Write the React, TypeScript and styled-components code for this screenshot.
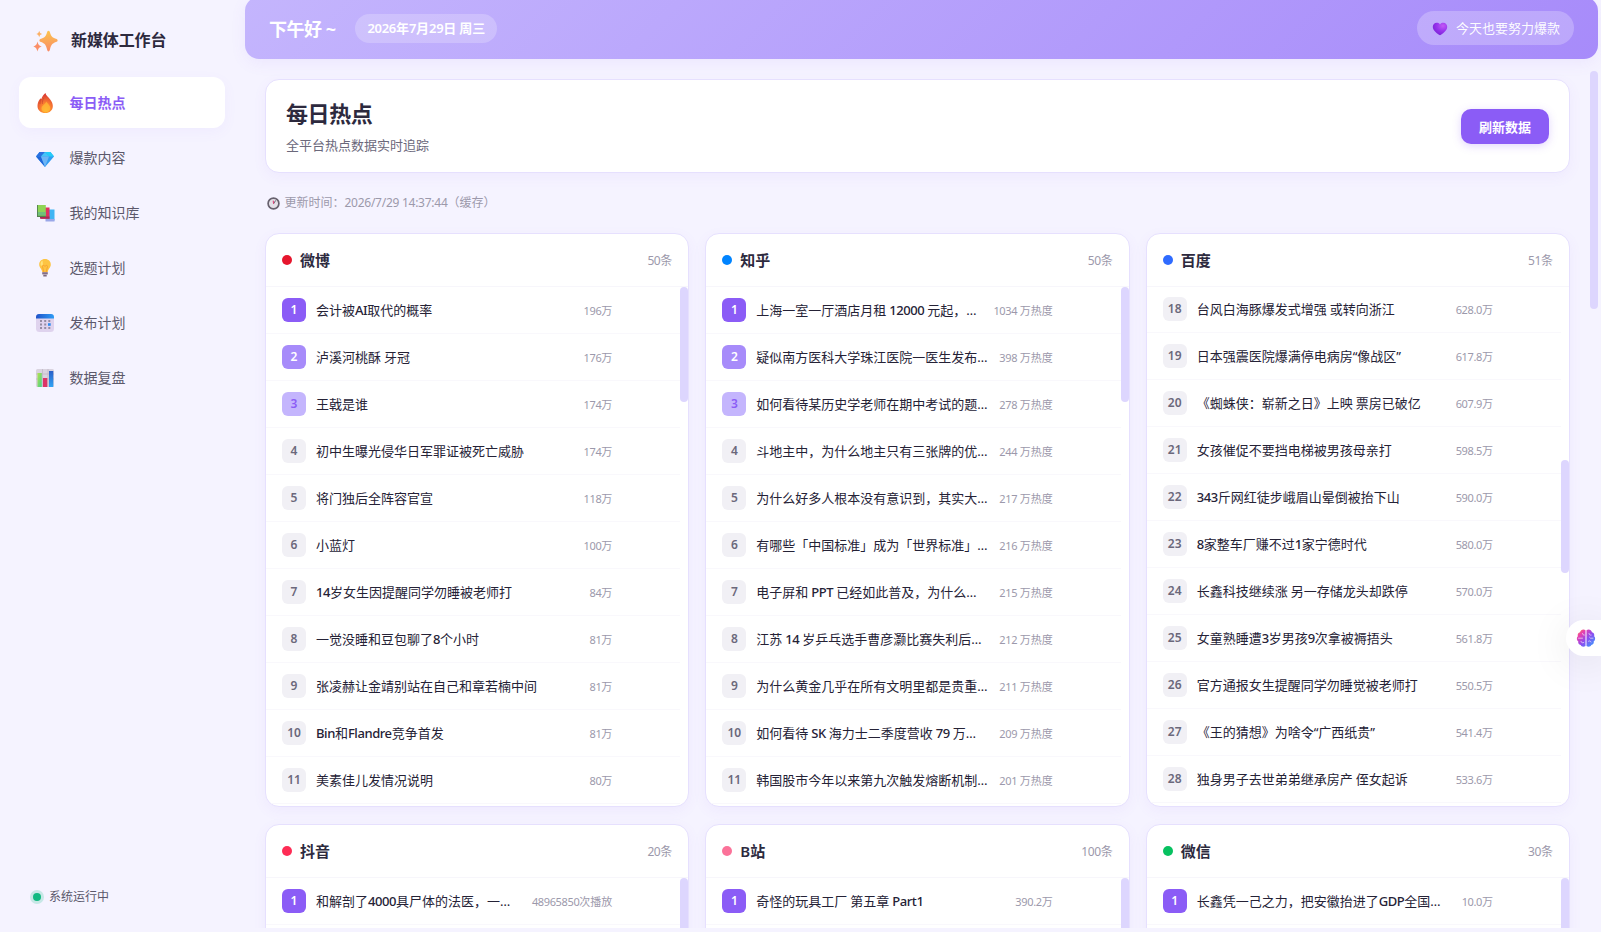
import React from 'react';
import styled, { createGlobalStyle } from 'styled-components';

const GlobalStyle = createGlobalStyle`
  * { box-sizing: border-box; }
  body {
    margin: 0;
    background: #f5f3ff;
    color: #2d2a3e;
    font-family: "Noto Sans", "Noto Sans CJK SC", sans-serif;
    overflow: hidden;
  }
  h1, h2, p { margin: 0; }
`;

/* ---------- text ---------- */

const Latin = styled.span<{ $weight?: number; $tracking?: number }>`
  letter-spacing: ${p => p.$tracking ?? -0.033}em;
  font-weight: ${p => p.$weight ?? 'inherit'};
`;

const Mixed = ({ children, weight, tracking }: { children: string; weight?: number; tracking?: number }) => (
  <>
    {children.split(/([A-Za-z0-9 ./:]+)/).map((part, i) =>
      i % 2 ? <Latin key={i} $weight={weight} $tracking={tracking}>{part}</Latin> : part
    )}
  </>
);

/* ---------- shell ---------- */

const Shell = styled.div`
  display: flex;
  width: 1601px;
  height: 928px;
  overflow: hidden;
`;

const Sidebar = styled.aside`
  width: 245px;
  flex: none;
  display: flex;
  flex-direction: column;
  padding: 21px 20px 20px 19px;
`;

const Brand = styled.div`
  display: flex;
  align-items: center;
  gap: 13px;
  height: 38px;
  margin-bottom: 18px;
  padding: 0 0 2px 14px;
  font-size: 16px;
  font-weight: 600;
  letter-spacing: -0.1px;
  color: #2d2a3e;
  svg { margin-top: 5px; }
`;

const Nav = styled.nav`
  display: flex;
  flex-direction: column;
  gap: 4px;
`;

const NavItem = styled.a<{ $active?: boolean }>`
  display: flex;
  align-items: center;
  gap: 15px;
  height: 51px;
  padding: 0 16px;
  border-radius: 12px;
  font-size: 14px;
  font-weight: ${p => (p.$active ? 600 : 400)};
  color: ${p => (p.$active ? '#8b5cf6' : '#5b586b')};
  background: ${p => (p.$active ? '#fff' : 'transparent')};
  box-shadow: ${p => (p.$active ? '0 4px 14px rgba(139, 92, 246, 0.05)' : 'none')};
`;

const NavLabel = styled.span`
  padding-bottom: 2px;
  margin-left: -0.5px;
`;

const Status = styled.div`
  display: flex;
  align-items: center;
  gap: 8px;
  margin-top: auto;
  padding: 0 14px 2px;
  font-size: 12px;
  line-height: 18px;
  color: #5b586b;
`;

const StatusDot = styled.i`
  width: 8px;
  height: 8px;
  border-radius: 50%;
  background: #10b981;
  box-shadow: 0 0 0 3px rgba(16, 185, 129, 0.2);
`;

const Main = styled.main`
  flex: 1;
  min-width: 0;
  margin-right: 3px;
  display: flex;
  flex-direction: column;
`;

const TopBar = styled.header`
  flex: none;
  display: flex;
  align-items: center;
  height: 62px;
  margin: -3px 0 12px;
  padding: 0 24px;
  border-radius: 14px;
  color: #fff;
  background: linear-gradient(135deg, #c4b5fd 0%, #a78bfa 100%);
  box-shadow: 0 4px 16px rgba(139, 92, 246, 0.08);
`;

const Greeting = styled.span`
  font-size: 18px;
  font-weight: 700;
  letter-spacing: -0.5px;
  margin-right: 20px;
`;

const DatePill = styled.span`
  height: 29px;
  padding: 0 12px;
  border-radius: 15px;
  font-size: 13px;
  font-weight: 600;
  line-height: 28px;
  background: rgba(255, 255, 255, 0.22);
`;

const MoodPill = styled.span`
  display: flex;
  align-items: center;
  gap: 8px;
  height: 34px;
  margin-left: auto;
  padding: 0 14px 0 15px;
  border-radius: 17px;
  font-size: 13px;
  background: rgba(255, 255, 255, 0.24);
  color: rgba(255, 255, 255, 0.98);
  svg { margin-top: 2px; }
`;

const MoodText = styled.span`
  padding-bottom: 2px;
`;

const Scroller = styled.div`
  flex: 1;
  min-height: 0;
  display: flex;
  overflow: hidden;
`;

const Content = styled.div`
  flex: 1;
  min-width: 0;
  padding: 8px 20px 0;
`;

const Track = styled.div`
  flex: none;
  width: 8px;
`;

const Thumb = styled.div<{ $top?: number; $size: number }>`
  width: 8px;
  height: ${p => p.$size}px;
  margin-top: ${p => p.$top ?? 0}px;
  border-radius: 4px;
  background: #ddd6fe;
`;

/* ---------- page heading ---------- */

const Panel = styled.section`
  background: #fff;
  border: 1px solid #e6e0fe;
  border-radius: 14px;
  box-shadow: 0 4px 14px rgba(139, 92, 246, 0.06);
`;

const Intro = styled(Panel)`
  display: flex;
  align-items: center;
  justify-content: space-between;
  height: 94px;
  padding: 0 20px;
`;

const Title = styled.h1`
  font-size: 22px;
  font-weight: 700;
  line-height: 34px;
  letter-spacing: -0.4px;
  margin-bottom: 4px;
`;

const Subtitle = styled.p`
  font-size: 13px;
  line-height: 22px;
  color: #6b687b;
`;

const RefreshButton = styled.button`
  width: 88px;
  height: 35px;
  padding: 0;
  border: 0;
  border-radius: 10px;
  font: 600 13px/33px "Noto Sans CJK SC", sans-serif;
  color: #fff;
  background: #8b5cf6;
  box-shadow: 0 2px 8px rgba(139, 92, 246, 0.25);
`;

const Updated = styled.div`
  display: flex;
  align-items: center;
  gap: 5px;
  height: 18px;
  margin: 21px 0;
  padding-left: 1.5px;
  font-size: 12px;
  color: #9c99ab;
`;

const UpdatedText = styled.span`
  padding-bottom: 2px;
`;

/* ---------- boards ---------- */

const Boards = styled.div`
  display: grid;
  grid-template-columns: repeat(3, 1fr);
  grid-auto-rows: 574px;
  gap: 17px 16px;
`;

const Board = styled(Panel)`
  display: flex;
  flex-direction: column;
  overflow: hidden;
`;

const BoardHead = styled.div`
  flex: none;
  display: flex;
  align-items: center;
  height: 53px;
  padding: 0 16px;
  border-bottom: 1px solid #f7f6fb;
`;

const Dot = styled.i<{ $color: string }>`
  width: 10px;
  height: 10px;
  margin-right: 8px;
  border-radius: 50%;
  background: ${p => p.$color};
`;

const BoardName = styled.h2`
  font-size: 15px;
  font-weight: 600;
  line-height: 22px;
`;

const Count = styled.span`
  margin-left: auto;
  padding-bottom: 1px;
  font-size: 12px;
  color: #9c99ab;
`;

const BoardBody = styled.div`
  flex: 1;
  min-height: 0;
  display: flex;
  overflow: hidden;
`;

const Rows = styled.div<{ $shift?: number }>`
  flex: 1;
  min-width: 0;
  margin-top: ${p => -(p.$shift ?? 0)}px;
`;

const Row = styled.div`
  display: flex;
  align-items: center;
  height: 47px;
  padding: 0 68px 0 16px;
  border-bottom: 1px solid #f9f8fc;
`;

const rankColors: Record<number, [string, string]> = {
  1: ['#8b5cf6', '#fff'],
  2: ['#a78bfa', '#fff'],
  3: ['#c4b5fd', '#8b5cf6'],
};

const Rank = styled.span<{ $rank: number }>`
  flex: none;
  width: 24px;
  height: 24px;
  margin-right: 10px;
  border-radius: 6px;
  font-size: 12px;
  font-weight: 600;
  line-height: 23px;
  text-align: center;
  background: ${p => rankColors[p.$rank]?.[0] ?? '#f1f0f5'};
  color: ${p => rankColors[p.$rank]?.[1] ?? '#6b687b'};
`;

const Topic = styled.span`
  flex: 1;
  min-width: 0;
  padding-bottom: 1px;
  font-size: 13px;
  font-weight: 400;
  white-space: nowrap;
  color: #252236;
`;

const Heat = styled.span`
  flex: none;
  padding-bottom: 1px;
  font-size: 11px;
  white-space: nowrap;
  color: #9c99ab;
`;

const Assistant = styled.div`
  position: fixed;
  top: 620px;
  right: 0;
  display: flex;
  align-items: center;
  width: 35px;
  height: 36px;
  padding-left: 10px;
  border-radius: 18px 0 0 18px;
  background: #fff;
  box-shadow: 0 6px 40px rgba(0, 0, 0, 0.1);
`;

/* ---------- icons ---------- */

const Sparkles = () => (
  <svg width="25" height="23" viewBox="0 0 25 23">
    <defs>
      <linearGradient id="spark" x1="0" y1="0" x2="0" y2="1">
        <stop offset="0" stopColor="#fcc44f" />
        <stop offset="1" stopColor="#f98a66" />
      </linearGradient>
    </defs>
    <path fill="url(#spark)" d="M15.500.800c.8 0 1.200.7 1.500 1.700 1 3.700 2.200 5 5.900 6.300 1.200.4 1.700.9 1.700 1.600s-.5 1.200-1.700 1.600c-3.700 1.400-4.900 3-5.900 7.300-.3 1.300-.7 2.100-1.500 2.100s-1.200-.8-1.500-2.100c-1-4.300-2.200-5.900-5.900-7.300-1.200-.4-1.700-.9-1.700-1.600s.5-1.200 1.700-1.600c3.700-1.300 4.900-2.600 5.900-6.300.3-1 .7-1.700 1.500-1.700z" />
    <path fill="#fbb066" d="M6.200.800c.6 2.200 1 2.600 3 3.200-2 .7-2.400 1.200-3 3.200-.6-2-1-2.500-2.900-3.200 1.900-.6 2.300-1 2.900-3.200z" />
    <path fill="#fb8f68" d="M4.500 11.500c.8 3.200 1.300 4 4.200 5-2.900 1.100-3.400 2-4.200 5.100-.8-3.100-1.400-4-4.200-5.100 2.800-1 3.400-1.800 4.200-5z" />
  </svg>
);

const Fire = () => (
  <svg width="20" height="20" viewBox="0 0 20 20">
    <defs>
      <radialGradient id="fire" cx=".55" cy=".85" r=".75">
        <stop offset="0" stopColor="#ffb02e" />
        <stop offset=".45" stopColor="#fb8230" />
        <stop offset="1" stopColor="#dc3f34" />
      </radialGradient>
    </defs>
    <path fill="url(#fire)" d="M10.500 0c.3 2.500 3 4.200 4.700 6.400 1.800 2.300 2.600 4.400 2.600 6.600 0 4.300-3 7-7.500 7S2.500 17.300 2.500 13c0-3 1-5.500 2.700-7.300.5-.5 1-.1 1 .5C7 4 8.500 1.500 10.500 0z" />
    <path fill="none" stroke="#c9482f" strokeWidth=".7" d="M6.200 6c-1 2-1.300 3.500-1.200 5M8.800 5c-1.300 2-1.500 4-1.300 5.800" />
    <path fill="#ffbf36" opacity=".7" d="M11.500 8.500c.2 1.700 3.800 3.600 3.800 6.800 0 2.400-1.900 3.900-4.500 3.900s-4.300-1.400-4.300-3.800c0-2.700 3.600-4 5-6.900z" />
  </svg>
);

const Gem = () => (
  <svg width="20" height="20" viewBox="0 0 20 20">
    <path fill="#2f9df2" d="M1 8.500 4.500 4h11L19 8.500 10 19z" />
    <path fill="#24cdf8" d="M10 4h5.500L19 8.500h-5z" />
    <path fill="#2a6fe0" d="M4.500 4H10L6 8.500H1z" />
    <path fill="#46c4f7" d="m10 4 4 4.500H6z" />
    <path fill="#2165d8" d="M1 8.500h5L10 19z" />
    <path fill="#6db4f5" d="M6 8.500h8L10 19z" />
  </svg>
);

const Books = () => (
  <svg width="20" height="20" viewBox="0 0 20 20">
    <path fill="#3fb4f3" d="M13 6.500h6.500v11H11z" />
    <path fill="#9aa7e8" d="M10.500 16h9v2.500h-9z" />
    <path fill="#e0315f" d="M9 4.500h5.500v11.200H6z" />
    <path fill="#a92a55" d="M5 13.500h9.500v2.200H5z" />
    <path fill="#8fd456" d="M2 2h8.800v11.500H2z" />
    <path fill="#6fc07c" d="M2 9h8.800v3.500H2z" />
    <path fill="#527f4f" d="M2 2h.9v12H2zM2.500 12.800h8.300v1.200H2.500z" />
  </svg>
);

const Bulb = () => (
  <svg width="20" height="20" viewBox="0 0 20 20">
    <path fill="#fdc443" d="M10 1c3.500 0 5.800 2.400 5.800 5.500 0 3.300-2.600 4.200-3 7.500H7.200c-.4-3.300-3-4.200-3-7.500C4.200 3.400 6.500 1 10 1z" />
    <path fill="#ffe27a" d="M7.500 2.500C5.500 3.500 5 6 6 8l2-1.500z" />
    <path fill="none" stroke="#f59b2d" strokeWidth=".8" d="M8.800 14 7.500 8.500c0-1.500 2-1.500 2.500 0 .5-1.500 2.500-1.500 2.500 0L11.200 14" />
    <path fill="#9b8598" d="M7.200 14h5.600v2.500H7.200z" />
    <path fill="#7c6880" d="M7.500 15h5v.7h-5zM8.300 16.800h3.400v1.800H8.300z" />
  </svg>
);

const Calendar = () => (
  <svg width="20" height="20" viewBox="0 0 20 20">
    <defs>
      <linearGradient id="calTop" x1="0" y1="0" x2="1" y2="0">
        <stop offset="0" stopColor="#1f52c9" />
        <stop offset="1" stopColor="#2e9cf5" />
      </linearGradient>
    </defs>
    <rect x="1" y="1" width="18" height="18" rx="3.500" fill="#dfd3ee" />
    <path fill="url(#calTop)" d="M4 1h12c1.800 0 3 1.200 3 3v1.500H1V4c0-1.800 1.200-3 3-3z" />
    <path fill="#968da4" d="M5 7h2v2H5zM9.200 7h2v2h-2zM13.300 7h2v2h-2zM5 10.500h2v2H5zM9.200 10.500h2v2h-2zM5 14h2v2H5zM9.200 14h2v2h-2zM13.300 14h2v2h-2z" />
    <path fill="#2c8cf0" d="M13 10.200h2.700v2.600H13z" />
  </svg>
);

const Chart = () => (
  <svg width="20" height="20" viewBox="0 0 20 20">
    <defs>
      <linearGradient id="barG" x1="0" y1="0" x2="1" y2="1">
        <stop offset="0" stopColor="#b4e24c" />
        <stop offset="1" stopColor="#45cf8e" />
      </linearGradient>
      <linearGradient id="barB" x1="0" y1="0" x2="0" y2="1">
        <stop offset="0" stopColor="#2a5fc9" />
        <stop offset="1" stopColor="#31a4f5" />
      </linearGradient>
    </defs>
    <rect x="1" y="1" width="18" height="18" rx="1.500" fill="#d9d3df" />
    <path stroke="#b8b0c0" strokeWidth=".6" d="M1 6h18M1 11h18M7.500 1v18M13 1v18" />
    <path fill="url(#barG)" d="M2.500 5h4.300v14H2.500z" />
    <path fill="#dc3468" d="M8 10h4.300v9H8z" />
    <path fill="url(#barB)" d="M14 3h4.300v16H14z" />
  </svg>
);

const Heart = () => (
  <svg width="16" height="14" viewBox="0 0 16 14">
    <defs>
      <radialGradient id="heart" cx=".7" cy=".25" r=".8">
        <stop offset="0" stopColor="#c25af5" />
        <stop offset=".5" stopColor="#9a35ee" />
        <stop offset="1" stopColor="#7a22d6" />
      </radialGradient>
    </defs>
    <path fill="url(#heart)" d="M8 2.500C9 1 10 .8 11.300.8c2.300 0 3.900 1.700 3.900 4 0 3.400-3.400 6-6.200 8-.7.5-1.300.5-2 0-2.800-2-6.200-4.600-6.200-8 0-2.300 1.600-4 3.900-4C6 .8 7 1 8 2.500z" />
  </svg>
);

const Clock = () => (
  <svg width="13" height="13" viewBox="0 0 13 13">
    <circle cx="6.500" cy="6.500" r="5.400" fill="#e4e0e8" stroke="#67616e" strokeWidth="1.700" />
    <path stroke="#55505c" strokeWidth=".9" d="M6.500 6.800 8.700 3.400" />
    <path stroke="#e0457a" strokeWidth="1.100" d="M6.600 6.800 6.200 3.600" />
  </svg>
);

const Brain = () => (
  <svg width="20" height="20" viewBox="0 0 20 20">
    <defs>
      <linearGradient id="brain" x1="0" y1="0" x2="1" y2="1">
        <stop offset="0" stopColor="#ff8a3c" />
        <stop offset=".25" stopColor="#e83fb0" />
        <stop offset=".55" stopColor="#8a4cf0" />
        <stop offset="1" stopColor="#2fa8ff" />
      </linearGradient>
    </defs>
    <path fill="url(#brain)" d="M9.500 2.200v15.800c-1.600 1.200-4.200.9-4.800-1-1.800-.3-2.900-1.900-2.400-3.500C.6 12.500.3 9.500 1.800 8.200 1.300 6.200 2.400 4.600 4 4.300 4.500 1.400 7.800.6 9.500 2.200zM10.500 2.200v15.800c1.600 1.200 4.200.9 4.800-1 1.800-.3 2.900-1.900 2.400-3.500 1.700-1 2-4 .5-5.300.5-2-.6-3.600-2.200-3.900-.5-2.900-3.800-3.700-5.500-2.100z" />
    <path fill="none" stroke="#fff" strokeWidth=".8" strokeLinecap="round" opacity=".75" d="M2.500 10.200h4M6.500 5.500c0 1 .7 1.600 1.800 1.600M5 13.500c.2 1.200 1.600 1.800 2.800 1M13 5.500c0 1.200 1 1.800 2.200 1.600M17 10.200h-2.500l-1-1M12.500 13.200c.8-.7 2-.4 2.500.8" />
  </svg>
);

/* ---------- data ---------- */

type Item = [string, string];
interface BoardData {
  name: string;
  color: string;
  count: number;
  first?: number;
  shift?: number;
  thumb: { top?: number; size: number };
  items: Item[];
}

const boards: BoardData[] = [
  {
    name: '微博', color: '#e6162d', count: 50, thumb: { size: 115 },
    items: [
      ['会计被AI取代的概率', '196万'],
      ['泸溪河桃酥 牙冠', '176万'],
      ['王戟是谁', '174万'],
      ['初中生曝光侵华日军罪证被死亡威胁', '174万'],
      ['将门独后全阵容官宣', '118万'],
      ['小蓝灯', '100万'],
      ['14岁女生因提醒同学勿睡被老师打', '84万'],
      ['一觉没睡和豆包聊了8个小时', '81万'],
      ['张凌赫让金靖别站在自己和章若楠中间', '81万'],
      ['Bin和Flandre竞争首发', '81万'],
      ['美素佳儿发情况说明', '80万'],
    ],
  },
  {
    name: '知乎', color: '#0084ff', count: 50, thumb: { size: 115 },
    items: [
      ['上海一室一厅酒店月租 12000 元起，…', '1034 万热度'],
      ['疑似南方医科大学珠江医院一医生发布…', '398 万热度'],
      ['如何看待某历史学老师在期中考试的题…', '278 万热度'],
      ['斗地主中，为什么地主只有三张牌的优…', '244 万热度'],
      ['为什么好多人根本没有意识到，其实大…', '217 万热度'],
      ['有哪些「中国标准」成为「世界标准」…', '216 万热度'],
      ['电子屏和 PPT 已经如此普及，为什么…', '215 万热度'],
      ['江苏 14 岁乒乓选手曹彦灏比赛失利后…', '212 万热度'],
      ['为什么黄金几乎在所有文明里都是贵重…', '211 万热度'],
      ['如何看待 SK 海力士二季度营收 79 万…', '209 万热度'],
      ['韩国股市今年以来第九次触发熔断机制…', '201 万热度'],
    ],
  },
  {
    name: '百度', color: '#2f6bff', count: 51, first: 18, shift: 1, thumb: { top: 173, size: 113 },
    items: [
      ['台风白海豚爆发式增强 或转向浙江', '628.0万'],
      ['日本强震医院爆满停电病房“像战区”', '617.8万'],
      ['《蜘蛛侠：崭新之日》上映 票房已破亿', '607.9万'],
      ['女孩催促不要挡电梯被男孩母亲打', '598.5万'],
      ['343斤网红徒步峨眉山晕倒被抬下山', '590.0万'],
      ['8家整车厂赚不过1家宁德时代', '580.0万'],
      ['长鑫科技继续涨 另一存储龙头却跌停', '570.0万'],
      ['女童熟睡遭3岁男孩9次拿被褥捂头', '561.8万'],
      ['官方通报女生提醒同学勿睡觉被老师打', '550.5万'],
      ['《王的猜想》为啥令“广西纸贵”', '541.4万'],
      ['独身男子去世弟弟继承房产 侄女起诉', '533.6万'],
    ],
  },
  {
    name: '抖音', color: '#fe2c55', count: 20, thumb: { size: 280 },
    items: [['和解剖了4000具尸体的法医，一…', '48965850次播放']],
  },
  {
    name: 'B站', color: '#fb7299', count: 100, thumb: { size: 80 },
    items: [['奇怪的玩具工厂 第五章 Part1', '390.2万']],
  },
  {
    name: '微信', color: '#07c160', count: 30, thumb: { size: 190 },
    items: [['长鑫凭一己之力，把安徽抬进了GDP全国…', '10.0万']],
  },
];

const navItems = [
  { label: '每日热点', Icon: Fire },
  { label: '爆款内容', Icon: Gem },
  { label: '我的知识库', Icon: Books },
  { label: '选题计划', Icon: Bulb },
  { label: '发布计划', Icon: Calendar },
  { label: '数据复盘', Icon: Chart },
];

export default function App() {
  return (
    <Shell>
      <GlobalStyle />
      <Sidebar>
        <Brand><Sparkles />新媒体工作台</Brand>
        <Nav>
          {navItems.map(({ label, Icon }, i) => (
            <NavItem key={label} $active={i === 0}><Icon /><NavLabel>{label}</NavLabel></NavItem>
          ))}
        </Nav>
        <Status><StatusDot />系统运行中</Status>
      </Sidebar>
      <Main>
        <TopBar>
          <Greeting>下午好 ~</Greeting>
          <DatePill><Mixed tracking={-0.026}>2026年7月29日 周三</Mixed></DatePill>
          <MoodPill><Heart /><MoodText>今天也要努力爆款</MoodText></MoodPill>
        </TopBar>
        <Scroller>
          <Content>
            <Intro>
              <div>
                <Title>每日热点</Title>
                <Subtitle>全平台热点数据实时追踪</Subtitle>
              </div>
              <RefreshButton>刷新数据</RefreshButton>
            </Intro>
            <Updated>
              <Clock />
              <UpdatedText><Mixed tracking={-0.022}>更新时间：2026/7/29 14:37:44（缓存）</Mixed></UpdatedText>
            </Updated>
            <Boards>
              {boards.map(b => (
                <Board key={b.name}>
                  <BoardHead>
                    <Dot $color={b.color} />
                    <BoardName>{b.name}</BoardName>
                    <Count><Mixed>{`${b.count}条`}</Mixed></Count>
                  </BoardHead>
                  <BoardBody>
                    <Rows $shift={b.shift}>
                      {b.items.map(([topic, heat], i) => {
                        const rank = (b.first ?? 1) + i;
                        return (
                          <Row key={rank}>
                            <Rank $rank={rank}>{rank}</Rank>
                            <Topic><Mixed weight={500}>{topic}</Mixed></Topic>
                            <Heat><Mixed>{heat}</Mixed></Heat>
                          </Row>
                        );
                      })}
                    </Rows>
                    <Track><Thumb $top={b.thumb.top} $size={b.thumb.size} /></Track>
                  </BoardBody>
                </Board>
              ))}
            </Boards>
          </Content>
          <Track><Thumb $size={238} /></Track>
        </Scroller>
      </Main>
      <Assistant><Brain /></Assistant>
    </Shell>
  );
}
